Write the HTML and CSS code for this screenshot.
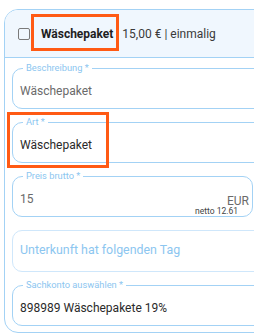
FILE: index.html
```html
<!DOCTYPE html>
<html lang="de">
  <head>
    <meta charset="utf-8" />
    <meta name="viewport" content="width=device-width" />
    <title>Wäschepaket</title>
    <link rel="stylesheet" href="styles.css">
  </head>

  <body>
    <div class="card">
      <div class="card-head">
        <span class="check"></span>
        <span class="title">Wäschepaket</span>
        <span class="meta">15,00 € | einmalig</span>
      </div>

      <div class="card-body">
        <fieldset class="field">
          <legend>Beschreibung *</legend>
          <div class="value muted">Wäschepaket</div>
        </fieldset>

        <fieldset class="field">
          <legend>Art *</legend>
          <div class="value">Wäschepaket</div>
        </fieldset>

        <fieldset class="field short">
          <legend>Preis brutto *</legend>
          <div class="value muted price">
            <span>15</span>
            <span class="unit">EUR</span>
          </div>
          <span class="netto">netto 12.61</span>
        </fieldset>

        <fieldset class="field empty">
          <div class="value placeholder">Unterkunft hat folgenden Tag</div>
        </fieldset>

        <fieldset class="field">
          <legend>Sachkonto auswählen *</legend>
          <div class="value">898989 Wäschepakete 19%</div>
        </fieldset>
      </div>

      <!-- annotation frames -->
      <div class="mark mark-title"></div>
      <div class="mark mark-art"></div>
    </div>
  </body>
</html>
```

FILE: styles.css
```css
html, body {
  margin: 0;
  padding: 0;
  overflow: hidden;
}

body {
  font-family: Roboto, "Liberation Sans", sans-serif;
  color: #222;
  background: #fff;
  width: 254px;
  height: 333px;
}

.card {
  position: relative;
  margin: 9px 0 0 4px;
  width: 300px;
  height: 324px;
  border: 1px solid #a3d2f5;
  border-radius: 14px;
  box-sizing: border-box;
}

.card-head {
  display: flex;
  align-items: center;
  height: 48px;
  padding-left: 13px;
  background: #f0f7fe;
  border-bottom: 1px solid #a3d2f5;
  border-radius: 13px 13px 0 0;
  box-sizing: border-box;
  font-size: 12px;
}

.check {
  width: 12px;
  height: 12px;
  border: 1.5px solid #7a7a7a;
  border-radius: 2px;
  box-sizing: border-box;
  margin-right: 11px;
  margin-top: 1px;
}

.title {
  font-weight: 700;
  color: #1e1e1e;
  margin-right: 9px;
}

.meta {
  color: #3a3a3a;
}

.card-body {
  display: flex;
  flex-direction: column;
  gap: 7px;
  padding: 4px 0 0 7px;
}

.field {
  margin: 0;
  padding: 0 7px;
  width: 280px;
  border: 1px solid #a3d2f5;
  border-radius: 10px;
  box-sizing: border-box;
  position: relative;
  min-inline-size: 0;
}

.field legend {
  margin-left: 3px;
  padding: 0 3px;
  font-size: 9.3px;
  line-height: 12px;
  color: #8cc6f0;
}

.value {
  height: 34px;
  line-height: 34px;
  font-size: 12px;
  color: #2a2a2a;
}

.muted {
  color: #6a6a6a;
}

.short {
  width: 241px;
}

.price {
  display: flex;
  justify-content: space-between;
}

.unit {
  padding-top: 2px;
  line-height: 34px;
  margin-right: -4px;
  color: #6a6a6a;
}

.netto {
  position: absolute;
  right: 14px;
  bottom: 0;
  font-size: 8.5px;
  line-height: 10px;
  color: #444;
}

.empty {
  margin-top: 6px;
  border-color: #cfe7fb;
}

.empty .value {
  height: 40px;
  line-height: 38px;
  font-size: 12.4px;
}

.placeholder {
  color: #8cc6f0;
}

.mark {
  position: absolute;
  border: 3px solid #ff5a14;
  box-sizing: border-box;
}

.mark-title {
  left: 26px;
  top: 4px;
  width: 88px;
  height: 37px;
}

.mark-art {
  left: 2px;
  top: 102px;
  width: 102px;
  height: 56px;
}
```
